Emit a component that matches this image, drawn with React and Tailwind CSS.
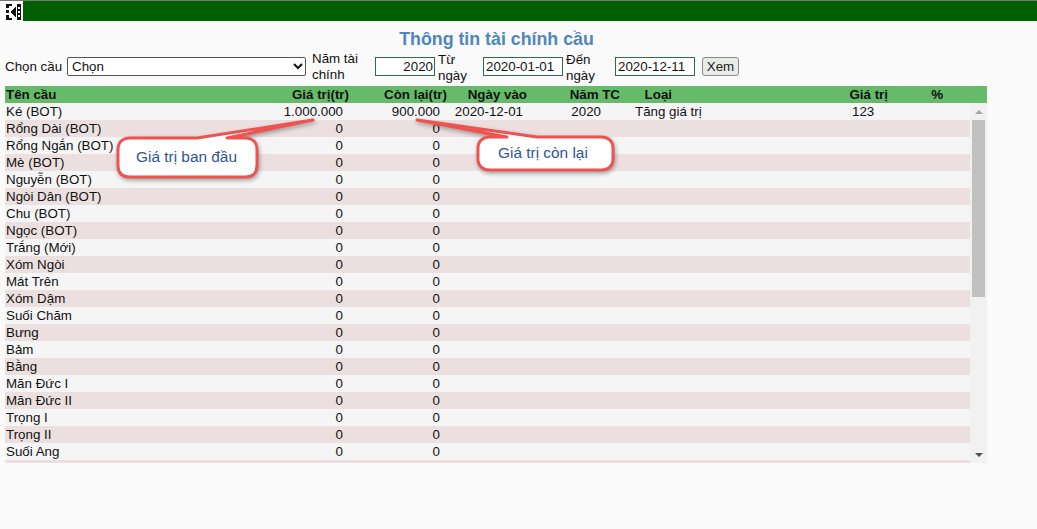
const rows = ["Ké (BOT)","Rổng Dài (BOT)","Rổng Ngắn (BOT)","Mè (BOT)","Nguyễn (BOT)","Ngòi Dân (BOT)","Chu (BOT)","Ngọc (BOT)","Trắng (Mới)","Xóm Ngòi","Mát Trên","Xóm Dậm","Suối Chăm","Bưng","Bảm","Bằng","Măn Đức I","Măn Đức II","Trọng I","Trọng II","Suối Ang",""];

function Callout({ text, box, tail, label }) {
  return (
    <div className={box}>
      <svg className="absolute inset-0 overflow-visible drop-shadow-[1px_2px_2px_rgba(0,0,0,0.35)]" width="100%" height="100%">
        <path d={tail} fill="#ffffff" stroke="#ef5350" strokeWidth="3" strokeLinejoin="round" />
      </svg>
      <span className={label}>{text}</span>
    </div>
  );
}

function BackIcon() {
  return (
    <div className="w-[23px] h-[21px] bg-white shrink-0 pl-[6px] pt-[3px]">
      <svg width="15" height="16" viewBox="0 0 15 16" shapeRendering="crispEdges">
        <path d="M0 0h6v2H3v2H0zM0 6h3v3H0zM0 11h3v3h3v2H0z" fill="#111" />
        <path d="M10 2v12L4 8z" fill="#111" />
        <path d="M11 0h4v16h-4z" fill="#111" />
        <path d="M12 3h2v2h-2zM12 7h2v2h-2zM12 11h2v2h-2z" fill="#fff" />
      </svg>
    </div>
  );
}

export default function App() {
  return (
    <div className="relative w-[1037px] h-[529px] overflow-hidden bg-[#fafafa] text-[13.33px] leading-[17px] text-[#111] font-['Liberation_Sans',Arial,sans-serif]">
      <div className="h-px bg-[#777]" />
      <div className="flex h-[20px] items-start">
        <BackIcon />
        <div className="flex-1 h-[20px] bg-[#006000]" />
      </div>

      <h1 className="mt-[8px] h-[20px] w-[993px] text-center text-[17.8px] leading-[20px] font-bold text-[#4f86bd]">Thông tin tài chính cầu</h1>

      <div className="-mt-[1px] ml-[5px] flex items-center h-[36px] leading-[16px]">
        <span className="w-[62px] mt-[1px]">Chọn cầu</span>
        <div className="relative w-[239px] h-[19px] mr-[6px] bg-white border border-[#555] rounded-[2px] pl-[4px] leading-[17px]">
          Chọn
          <svg className="absolute right-[1px] top-[4px]" width="12" height="9" viewBox="0 0 12 9">
            <path d="M2 2l4 4 4-4" fill="none" stroke="#111" strokeWidth="2" />
          </svg>
        </div>
        <span className="w-[63px] mt-[1px]">Năm tài chính</span>
        <div className="w-[60px] h-[19px] mr-[3px] bg-white border border-[#2f6b4f] pr-[1px] text-right leading-[17px]">2020</div>
        <span className="w-[45px] mt-[3px]">Từ ngày</span>
        <div className="w-[80px] h-[19px] mr-[3px] bg-white border border-[#2f6b4f] pl-[2px] leading-[17px]">2020-01-01</div>
        <span className="w-[49px] mt-[3px]">Đến ngày</span>
        <div className="w-[80px] h-[19px] mr-[7px] bg-white border border-[#2f6b4f] pl-[2px] leading-[17px]">2020-12-11</div>
        <button className="w-[37px] h-[19px] bg-[#e9ebe6] border border-[#8a8a8a] rounded-[3px] leading-[15px] text-[#222]">Xem</button>
      </div>

      <div className="mt-[2px] ml-[5px] w-[982px]">
        <div className="flex h-[17px] bg-[#66bb6a] font-bold">
          <span className="w-[264px] pl-[1px]">Tên cầu</span>
          <span className="w-[80px] text-right">Giá trị(tr)</span>
          <span className="w-[98px] text-right">Còn lại(tr)</span>
          <span className="w-[80px] text-right">Ngày vào</span>
          <span className="w-[93px] text-right">Năm TC</span>
          <span className="w-[52px] text-right">Loại</span>
          <span className="w-[216px] text-right">Giá trị</span>
          <span className="w-[55px] text-right">%</span>
        </div>
        <div className="flex h-[360px] overflow-hidden bg-[#f1f1f1]">
          <div className="w-[965px] shrink-0">
            {rows.map((name, i) => (
              <div key={i} className={`flex h-[17px] ${i % 2 ? "bg-[#ebe0df]" : "bg-[#f5f5f5]"}`}>
                <span className="w-[264px] pl-[1px]">{name}</span>
                {name && <span className="w-[74px] text-right">{i === 0 ? "1.000.000" : "0"}</span>}
                {name && <span className="w-[97px] text-right">{i === 0 ? "900.000" : "0"}</span>}
                {i === 0 && (
                  <>
                    <span className="w-[83px] text-right">2020-12-01</span>
                    <span className="w-[78px] text-right">2020</span>
                    <span className="w-[34px]" />
                    <span className="w-[217px]">Tăng giá trị</span>
                    <span className="w-[40px]">123</span>
                  </>
                )}
              </div>
            ))}
          </div>
          <div className="flex-1 flex flex-col items-center w-[17px]">
            <div className="h-[17px] flex items-center justify-center">
              <div className="w-0 h-0 border-x-[4px] border-x-transparent border-b-[4px] border-b-[#a3a3a3]" />
            </div>
            <div className="w-[13px] h-[177px] bg-[#c1c1c1]" />
            <div className="flex-1" />
            <div className="h-[17px] flex items-center justify-center">
              <div className="w-0 h-0 border-x-[4px] border-x-transparent border-t-[4px] border-t-[#505050]" />
            </div>
          </div>
        </div>
      </div>

      <Callout
        text="Giá trị ban đầu"
        box="absolute left-[118px] top-[120px] w-[196px] h-[60px]"
        tail="M12 18H79L195 0L109 18H127C135 18 139 23 139 30V45C139 53 135 57 127 57H12C4 57 0 53 0 45V30C0 23 4 18 12 18Z"
        label="absolute left-[18px] top-[28px] text-[15.4px] leading-[18px] text-[#2f5597]"
      />
      <Callout
        text="Giá trị còn lại"
        box="absolute left-[417px] top-[120px] w-[196px] h-[52px]"
        tail="M0 0L120 17H184C191 17 196 21 196 28V39C196 46 191 50 184 50H73C66 50 61 46 61 39V28C61 21 66 17 73 17H90Z"
        label="absolute left-[81px] top-[24px] text-[15.4px] leading-[18px] text-[#2f5597]"
      />
    </div>
  );
}
